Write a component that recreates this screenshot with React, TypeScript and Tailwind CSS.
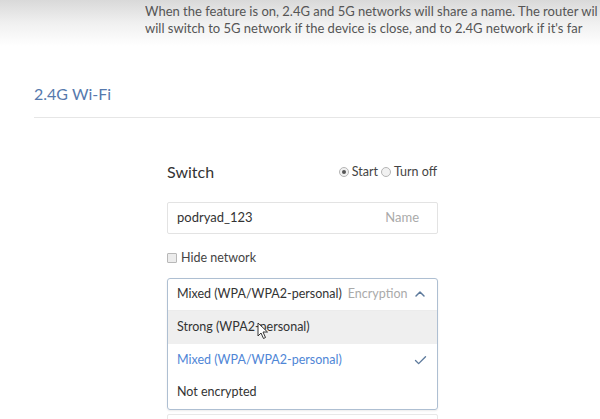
import { Check, ChevronUp } from "lucide-react";

const font = { fontFamily: 'Lato, "Open Sans", sans-serif' };

function Radio({ checked, label }: { checked: boolean; label: string }) {
  return (
    <label className="flex items-center gap-[3px]">
      <span className="w-[10px] h-[10px] rounded-full border border-[#b5b5b5] bg-[#f1f1f1] flex items-center justify-center">
        {checked && <span className="w-[4px] h-[4px] rounded-full bg-[#555]" />}
      </span>
      <span>{label}</span>
    </label>
  );
}

function Cursor() {
  return (
    <svg className="absolute left-[257px] top-[322px]" width="12" height="18" viewBox="0 0 12 18">
      <path d="M1 1 L1 14 L4 11 L6.5 16.5 L8.5 15.5 L6 10 L10.5 10 Z" fill="#fff" stroke="#333" strokeWidth="1" strokeLinejoin="round" />
    </svg>
  );
}

export default function App() {
  return (
    <div className="relative w-[600px] h-[419px] overflow-hidden bg-white text-[#444]" style={font}>
      {/* notice text */}
      <div className="h-[46px] bg-gradient-to-b from-[#d9d9d9] via-[#f0f0f0] to-white pl-[145px] pt-[3px] text-[13px] leading-[17px] text-[#555]">
        <p className="whitespace-nowrap overflow-hidden">When the feature is on, 2.4G and 5G networks will share a name. The router wil</p>
        <p className="whitespace-nowrap overflow-hidden">will switch to 5G network if the device is close, and to 2.4G network if it's far</p>
      </div>

      <div className="ml-[34px] mt-[38px]">
        <h2 className="text-[16px] text-[#5679ad] leading-[20px]">2.4G Wi-Fi</h2>
        <div className="mt-[13px] border-t border-[#e6e6e6]" />
      </div>

      <div className="ml-[167px] w-[271px] mt-[42px]">
        <div className="flex items-center justify-between">
          <span className="text-[16px] text-[#333]">Switch</span>
          <div className="flex items-center gap-[3px] text-[12.5px] text-[#444] mr-[1px]">
            <Radio checked label="Start" />
            <Radio checked={false} label="Turn off" />
          </div>
        </div>

        <div className="mt-[18px] h-[32px] border border-[#e3e3e3] rounded-[2px] flex items-center justify-between px-[9px] text-[13px]">
          <span className="text-[#333]">podryad_123</span>
          <span className="text-[#aaa] mr-[9px]">Name</span>
        </div>

        <label className="mt-[15px] flex items-center gap-[4px] text-[12.5px] text-[#444]">
          <span className="w-[10px] h-[10px] border border-[#b8b8b8] bg-[#ececec] rounded-[1px]" />
          Hide network
        </label>

        <div className="mt-[10px] border border-[#aebfd2] rounded-[3px] text-[12.5px] shadow-[0_1px_2px_rgba(0,0,0,0.08)]">
          <div className="h-[32px] flex items-center px-[9px] border-b border-[#ececec] whitespace-nowrap">
            <span className="text-[#333]">Mixed (WPA/WPA2-personal)</span>
            <span className="ml-[6px] text-[#aaa]">Encryption</span>
            <ChevronUp className="ml-auto shrink-0 text-[#5d7a9c]" size={16} strokeWidth={2.2} />
          </div>
          <div className="h-[33px] flex items-center px-[9px] bg-[#efefef] text-[#333]">Strong (WPA2-personal)</div>
          <div className="h-[33px] flex items-center justify-between px-[9px] text-[#4f86d6]">
            <span>Mixed (WPA/WPA2-personal)</span>
            <Check className="text-[#5d7a9c]" size={15} strokeWidth={2.2} />
          </div>
          <div className="h-[32px] flex items-center px-[9px] text-[#333]">Not encrypted</div>
        </div>

        <div className="mt-[4px] h-[20px] border border-[#e8e8e8] rounded-[2px]" />
      </div>

      <Cursor />
    </div>
  );
}
